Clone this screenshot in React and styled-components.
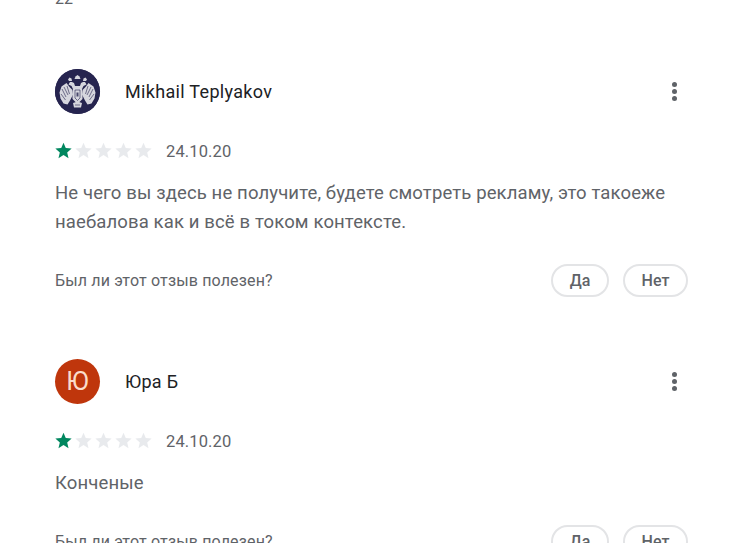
import React from "react";
import styled, { createGlobalStyle } from "styled-components";

const GlobalStyle = createGlobalStyle`
  html, body {
    margin: 0;
    padding: 0;
    background: #fff;
    overflow: hidden;
  }
  body {
    font-family: Roboto, "Noto Sans", sans-serif;
  }
`;

const Page = styled.main`
  height: 543px;
  overflow: hidden;
  padding: 0 68px 0 55px;
`;

const LikesCount = styled.div`
  margin-top: -11px;
  height: 80px;
  font-size: 16px;
  line-height: 19px;
  color: #5f6368;
`;

const Review = styled.article`
  height: 290px;
`;

const Header = styled.header`
  display: flex;
  align-items: center;
  height: 45px;
`;

const Avatar = styled.div`
  width: 45px;
  height: 45px;
  border-radius: 50%;
  flex: none;
  display: flex;
  align-items: center;
  justify-content: center;
  overflow: hidden;
  background: ${(p) => p.$bg};
  color: #fbdccb;
  font-size: 25px;
`;

const Name = styled.div`
  margin-left: 25px;
  flex: 1;
  font-size: 18px;
  letter-spacing: 0.32px;
  color: #202124;
`;

const MoreButton = styled.div`
  display: flex;
  flex-direction: column;
  gap: 2px;
  margin-right: 11px;
`;

const Dot = styled.span`
  width: 5px;
  height: 5px;
  border-radius: 50%;
  background: #5f6368;
`;

const RatingRow = styled.div`
  display: flex;
  align-items: center;
  margin-top: 26px;
  height: 20px;
`;

const Stars = styled.div`
  display: flex;
  gap: 3px;
`;

const DateText = styled.span`
  margin-left: 14px;
  padding-top: 2px;
  font-size: 16.5px;
  letter-spacing: 0.12px;
  color: #5f6368;
`;

const Body = styled.p`
  margin: 19px 0 0;
  font-size: 18.5px;
  line-height: 29px;
  letter-spacing: 0.13px;
  color: #5f6368;
`;

const Helpful = styled.div`
  display: flex;
  align-items: center;
  margin-top: 27px;
`;

const HelpfulLabel = styled.span`
  flex: 1;
  font-size: 16px;
  letter-spacing: 0.15px;
  color: #5f6368;
`;

const VoteButton = styled.button`
  width: ${(p) => p.$w}px;
  height: 33px;
  margin-left: ${(p) => p.$gap || 0}px;
  padding: 0;
  border: 2px solid #e3e4e6;
  border-radius: 17px;
  background: #fff;
  font-family: inherit;
  font-size: 16px;
  font-weight: 500;
  color: #5f6368;
`;

const Star = ({ on }) => (
  <svg width="17" height="17" viewBox="0 0 24 24">
    <path
      d="M12 1l3.2 7.6 8.3.7-6.300 5.400 1.900 8.100L12 18.500l-7.100 4.300 1.900-8.100L.5 9.300l8.300-.7z"
      fill={on ? "#01875f" : "#e8eaed"}
    />
  </svg>
);

// double headed eagle, kept rough because the avatar is only 45px
const Eagle = () => (
  <svg width="45" height="45" viewBox="0 0 45 45">
    <rect width="45" height="45" fill="#26244f" />
    <g fill="#d6d6de">
      <path d="M19.500 10l1-2.500 2-1.500 2 1.500 1 2.500z" />
      <path d="M13 10.500l1.500-2 2 1 .5 2.500h-3zM32 10.500l-1.500-2-2 1-.5 2.500h3z" />
      <path d="M17 13h-2l-1.500 2.500 3 1.500 1.500 3 2-3-1-3zM28 13h2l1.500 2.500-3 1.500-1.500 3-2-3 1-3z" />
      <path d="M14.500 18l-3-4-5 3.500-2 6 1 6 3 5 4 1 2.500-4 3-6-1-5zM30.500 18l3-4 5 3.500 2 6-1 6-3 5-4 1-2.500-4-3-6 1-5z" />
      <path d="M18.500 17h8l1 5v8l-5 5-5-5v-8z" />
      <path d="M18 34l4.500-1.500L27 34l-1 4.500h-7z" />
    </g>
    <g stroke="#26244f" strokeWidth=".6" fill="none">
      <path d="M7 20l4 8M9 18l4 8M12 17l2.500 8M6 25l4.500 6" />
      <path d="M38 20l-4 8M36 18l-4 8M33 17l-2.500 8M39 25l-4.500 6" />
      <path d="M20 21v8l2.500 2.500L25 29v-8z" />
      <path d="M20 36h5" />
    </g>
    <path d="M21.500 23.500h2v4h-2z" fill="#26244f" opacity=".8" />
  </svg>
);

const reviews = [
  {
    id: 1,
    name: "Mikhail Teplyakov",
    date: "24.10.20",
    bg: "#26244f",
    avatar: <Eagle />,
    text: (
      <>
        Не чего вы здесь не получите, будете смотреть рекламу, это такоеже
        <br />
        наебалова как и всё в током контексте.
      </>
    ),
  },
  {
    id: 2,
    name: "Юра Б",
    date: "24.10.20",
    bg: "#bf360c",
    avatar: "Ю",
    text: "Конченые",
  },
];

const App = () => {
  return (
    <Page>
      <GlobalStyle />
      <LikesCount>22</LikesCount>
      {reviews.map((r) => (
        <Review key={r.id}>
          <Header>
            <Avatar $bg={r.bg}>{r.avatar}</Avatar>
            <Name>{r.name}</Name>
            <MoreButton>
              <Dot />
              <Dot />
              <Dot />
            </MoreButton>
          </Header>
          <RatingRow>
            <Stars>
              {[0, 1, 2, 3, 4].map((i) => (
                <Star key={i} on={i === 0} />
              ))}
            </Stars>
            <DateText>{r.date}</DateText>
          </RatingRow>
          <Body>{r.text}</Body>
          <Helpful>
            <HelpfulLabel>Был ли этот отзыв полезен?</HelpfulLabel>
            <VoteButton $w={58}>Да</VoteButton>
            <VoteButton $w={65} $gap={14}>Нет</VoteButton>
          </Helpful>
        </Review>
      ))}
    </Page>
  );
};

export default App;
